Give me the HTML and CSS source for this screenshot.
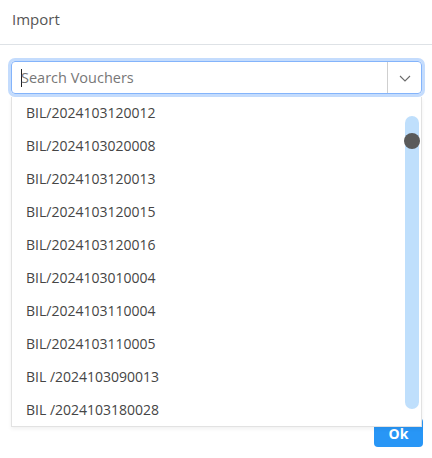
FILE: index.html
```html
<!DOCTYPE html>
<html>
<head>
<meta charset="utf-8">
<link rel="stylesheet" href="styles.css">
</head>
<body>
<div class="modal">
  <div class="header">Import</div>
  <div class="content">
    <div class="select">
      <div class="control">
        <div class="input"><span class="caret"></span><span class="placeholder">Search Vouchers</span></div>
        <div class="sep"></div>
        <div class="arrow">
          <svg width="12" height="7" viewBox="0 0 12 7"><path d="M1 1 L6 6 L11 1" fill="none" stroke="#6b6b6b" stroke-width="1.1"/></svg>
        </div>
      </div>
      <div class="menu">
        <div class="options">
          <div class="option">BIL/2024103120012</div>
          <div class="option">BIL/2024103020008</div>
          <div class="option">BIL/2024103120013</div>
          <div class="option">BIL/2024103120015</div>
          <div class="option">BIL/2024103120016</div>
          <div class="option">BIL/2024103010004</div>
          <div class="option">BIL/2024103110004</div>
          <div class="option">BIL/2024103110005</div>
          <div class="option">BIL /2024103090013</div>
          <div class="option">BIL /2024103180028</div>
        </div>
        <div class="scrollbar"><div class="thumb"></div></div>
      </div>
    </div>
    <div class="footer">
      <button class="ok">Ok</button>
    </div>
  </div>
</div>
</body>
</html>
```
FILE: styles.css
```css
* { box-sizing: border-box; }
html, body { margin: 0; padding: 0; background: #fff; }
body { font-family: "Open Sans", "Noto Sans", sans-serif; color: #444; }
.modal { width: 432px; height: 458px; display: flex; flex-direction: column; overflow: hidden; }
.header {
  flex-shrink: 0;
  height: 45px;
  padding: 9px 12px 0;
  font-size: 15px;
  color: #555;
  border-bottom: 1px solid #dee2e6;
}
.content { flex-shrink: 0; padding: 16px 10px 0 11px; display: flex; flex-direction: column; }
.select { position: relative; }
.control {
  height: 33px;
  display: flex;
  align-items: stretch;
  border: 1px solid #84b4fb;
  border-radius: 4px;
  box-shadow: 0 0 0 3px #c4dcfd;
}
.input { flex: 1; display: flex; align-items: center; padding-left: 9px; }
.caret { width: 1px; height: 18px; background: #222; margin-right: -1px; }
.placeholder { font-size: 14.5px; color: #777; }
.sep { width: 1px; background: #cfcfcf; }
.arrow { width: 33px; display: flex; align-items: center; justify-content: center; padding-top: 1px; }
.menu {
  position: absolute;
  left: 0; right: 0;
  top: 36px;
  height: 330px;
  background: #fff;
  border: 1px solid #e2e2e2;
  border-top: none;
  box-shadow: 0 2px 4px rgba(0,0,0,0.06);
  display: flex;
  z-index: 2;
}
.options { flex: 1; }
.option {
  height: 33px;
  display: flex;
  align-items: center;
  padding-left: 14px;
  padding-bottom: 2px;
  font-size: 14px;
  color: #454545;
}
.scrollbar {
  width: 14px;
  margin: 19px 2px 17px 0;
  background: #bfdffc;
  border-radius: 7px;
  position: relative;
}
.thumb {
  position: absolute;
  left: -1px; top: 17px;
  width: 16px; height: 16px;
  border-radius: 50%;
  background: #5a5a5a;
}
.footer { display: flex; justify-content: flex-end; margin-top: 324px; }
.ok {
  width: 49px; height: 29px;
  background: #2896f6;
  color: #fff;
  border: none;
  border-radius: 4px;
  font-family: "Open Sans", sans-serif;
  font-weight: 700;
  font-size: 14px;
  margin-right: -1px;
  padding-top: 2px;
}
```
